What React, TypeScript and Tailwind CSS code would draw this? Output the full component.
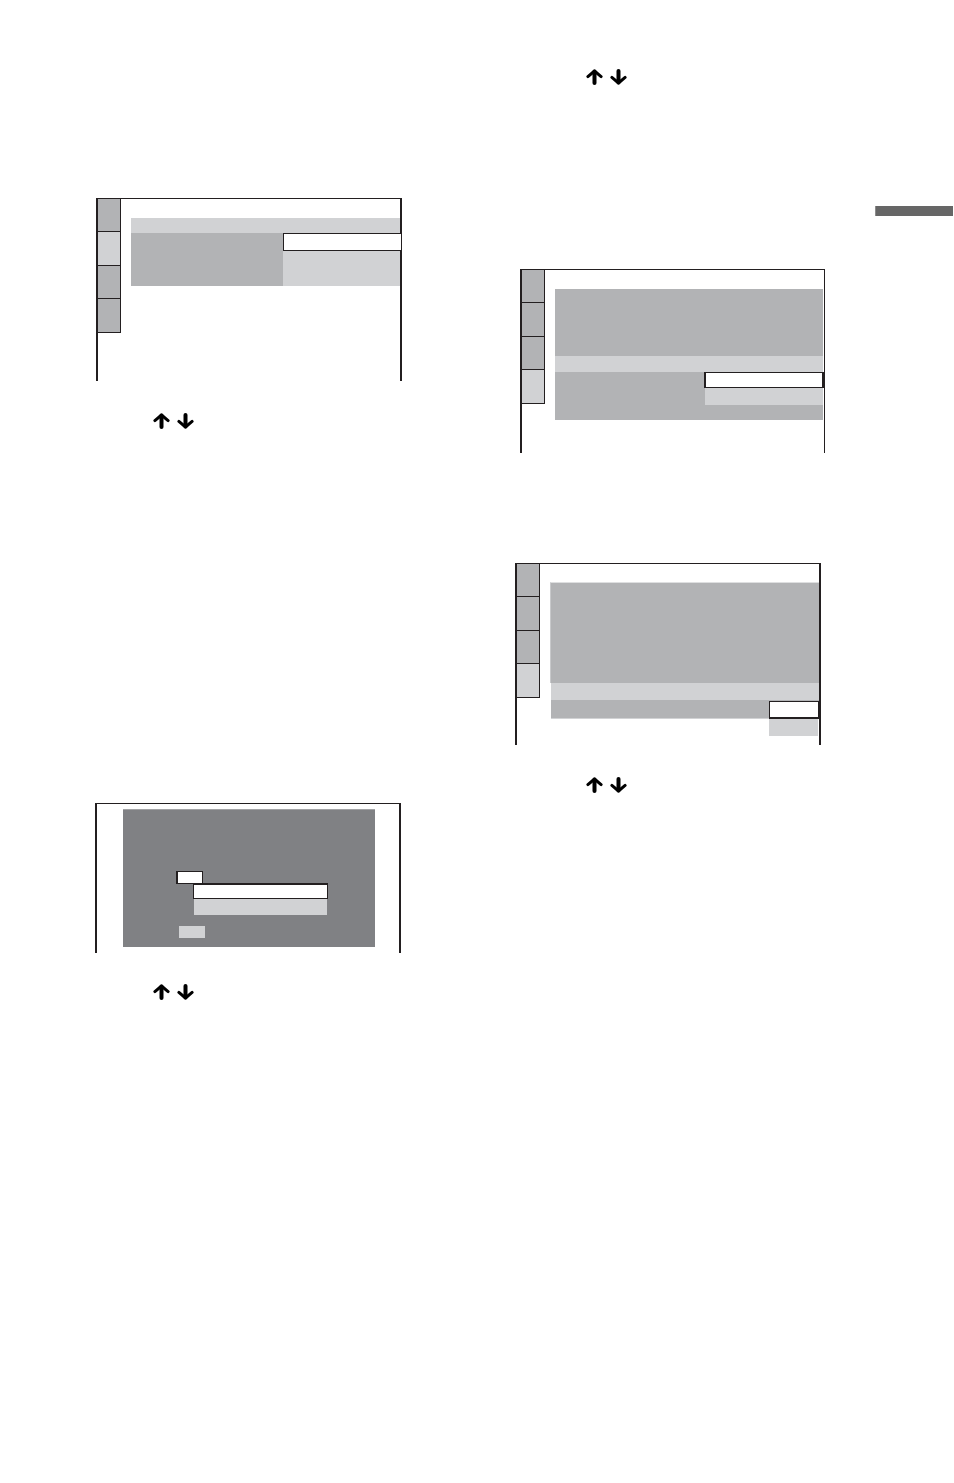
import React from 'react';
import clsx from 'clsx';

const ArrowPair: React.FC<{ className?: string }> = ({ className }) => (
  <div className={clsx('flex gap-[7px]', className)}>
    <svg className="h-4 w-[17px]" viewBox="0 0 17 16" fill="none" stroke="#000" strokeLinecap="round">
      <path d="M8.5 2.5V14" strokeWidth="4" />
      <path d="M1.9 7.6 8.5 2 15.1 7.6" strokeWidth="3" strokeLinejoin="round" />
    </svg>
    <svg className="h-4 w-[17px]" viewBox="0 0 17 16" fill="none" stroke="#000" strokeLinecap="round">
      <path d="M8.5 13.5V2" strokeWidth="4" />
      <path d="M1.9 8.4 8.5 14 15.1 8.4" strokeWidth="3" strokeLinejoin="round" />
    </svg>
  </div>
);

const tabHeights = ['h-[33px]', 'h-[34px]', 'h-[33px]', 'h-[34px]'];

const TabRail: React.FC<{ active: number }> = ({ active }) => (
  <div className="w-[23px] shrink-0 self-start border-r border-[#231f20]">
    {tabHeights.map((height, i) => (
      <div
        key={i}
        className={clsx('border-b border-[#231f20]', height, i === active ? 'bg-[#d1d2d4]' : 'bg-[#b2b3b5]')}
      />
    ))}
  </div>
);

const Screen: React.FC<{ className?: string; children: React.ReactNode }> = ({ className, children }) => (
  <div className={clsx('flex border-t border-l-2 border-[#231f20]', className)}>{children}</div>
);

const App: React.FC = () => {
  return (
    <main className="flex min-h-screen bg-white">
      {/* Left column */}
      <div className="w-[54%] shrink-0 pt-[198px] pl-[95px]">
        <Screen className="ml-px h-[183px] w-[306px] border-r-2">
          <TabRail active={1} />
          <div className="mt-[19px] ml-2.5 flex-1">
            <div className="h-[15px] bg-[#d1d2d4]" />
            <div className="flex h-[53px] bg-[#b2b3b5]">
              <div className="ml-auto w-[117px] bg-[#d1d2d4]">
                <div className="-mr-0.5 h-[18px] border border-[#231f20] bg-white" />
              </div>
            </div>
          </div>
        </Screen>

        <ArrowPair className="mt-8 ml-[58px]" />

        <Screen className="mt-[374px] h-[150px] w-[306px] border-r-2">
          <div className="mt-[5px] mr-6 ml-[26px] h-[138px] flex-1 border-t border-[#a2a3a5] bg-[#808184] pt-[61px] pl-[53px]">
            <div className="h-[13px] w-[27px] border border-l-2 border-[#231f20] bg-white" />
            <div className="-mt-px ml-[17px] h-4 w-[135px] border border-t-2 border-[#231f20] bg-white" />
            <div className="ml-[18px] h-4 w-[133px] bg-[#d1d2d4]" />
            <div className="mt-[11px] ml-[3px] h-3 w-[26px] bg-[#d1d2d4]" />
          </div>
        </Screen>

        <ArrowPair className="mt-[31px] ml-[58px]" />
      </div>

      {/* Right column */}
      <div className="flex-1 pt-[69px]">
        <ArrowPair className="ml-[71px]" />

        <div className="mt-[121px] mr-px ml-auto h-2.5 w-[78px] border-l border-[#8c8c8c] bg-[#666]" />

        <Screen className="mt-[53px] ml-[5px] h-[184px] w-[305px] border-r">
          <TabRail active={3} />
          <div className="mt-[19px] mr-px ml-2.5 flex-1">
            <div className="h-[67px] bg-[#b2b3b5]" />
            <div className="h-4 bg-[#d1d2d4]" />
            <div className="flex h-12 bg-[#b2b3b5]">
              <div className="ml-auto w-[118px]">
                <div className="-mr-px -ml-px h-4 border-x-2 border-y border-[#231f20] bg-white" />
                <div className="h-[17px] bg-[#d1d2d4]" />
              </div>
            </div>
          </div>
        </Screen>

        <Screen className="mt-[110px] h-[182px] w-[306px] border-r-2">
          <TabRail active={3} />
          <div className="mt-[18px] ml-2.5 flex-1 border-l border-transparent">
            <div className="-ml-px h-[101px] border-t border-l border-t-[#dedfe0] border-l-[#c8c9cb] bg-[#b2b3b5]" />
            <div className="h-[17px] bg-[#d1d2d4]" />
            <div className="flex h-[19px] border-b border-[#d1d2d4] bg-[#b2b3b5] pt-px">
              <div className="ml-auto w-[50px]">
                <div className="h-[18px] border border-b-2 border-[#231f20] bg-white" />
                <div className="mr-px h-[17px] bg-[#d1d2d4]" />
              </div>
            </div>
          </div>
        </Screen>

        <ArrowPair className="mt-8 ml-[71px]" />
      </div>
    </main>
  );
};

export default App;
